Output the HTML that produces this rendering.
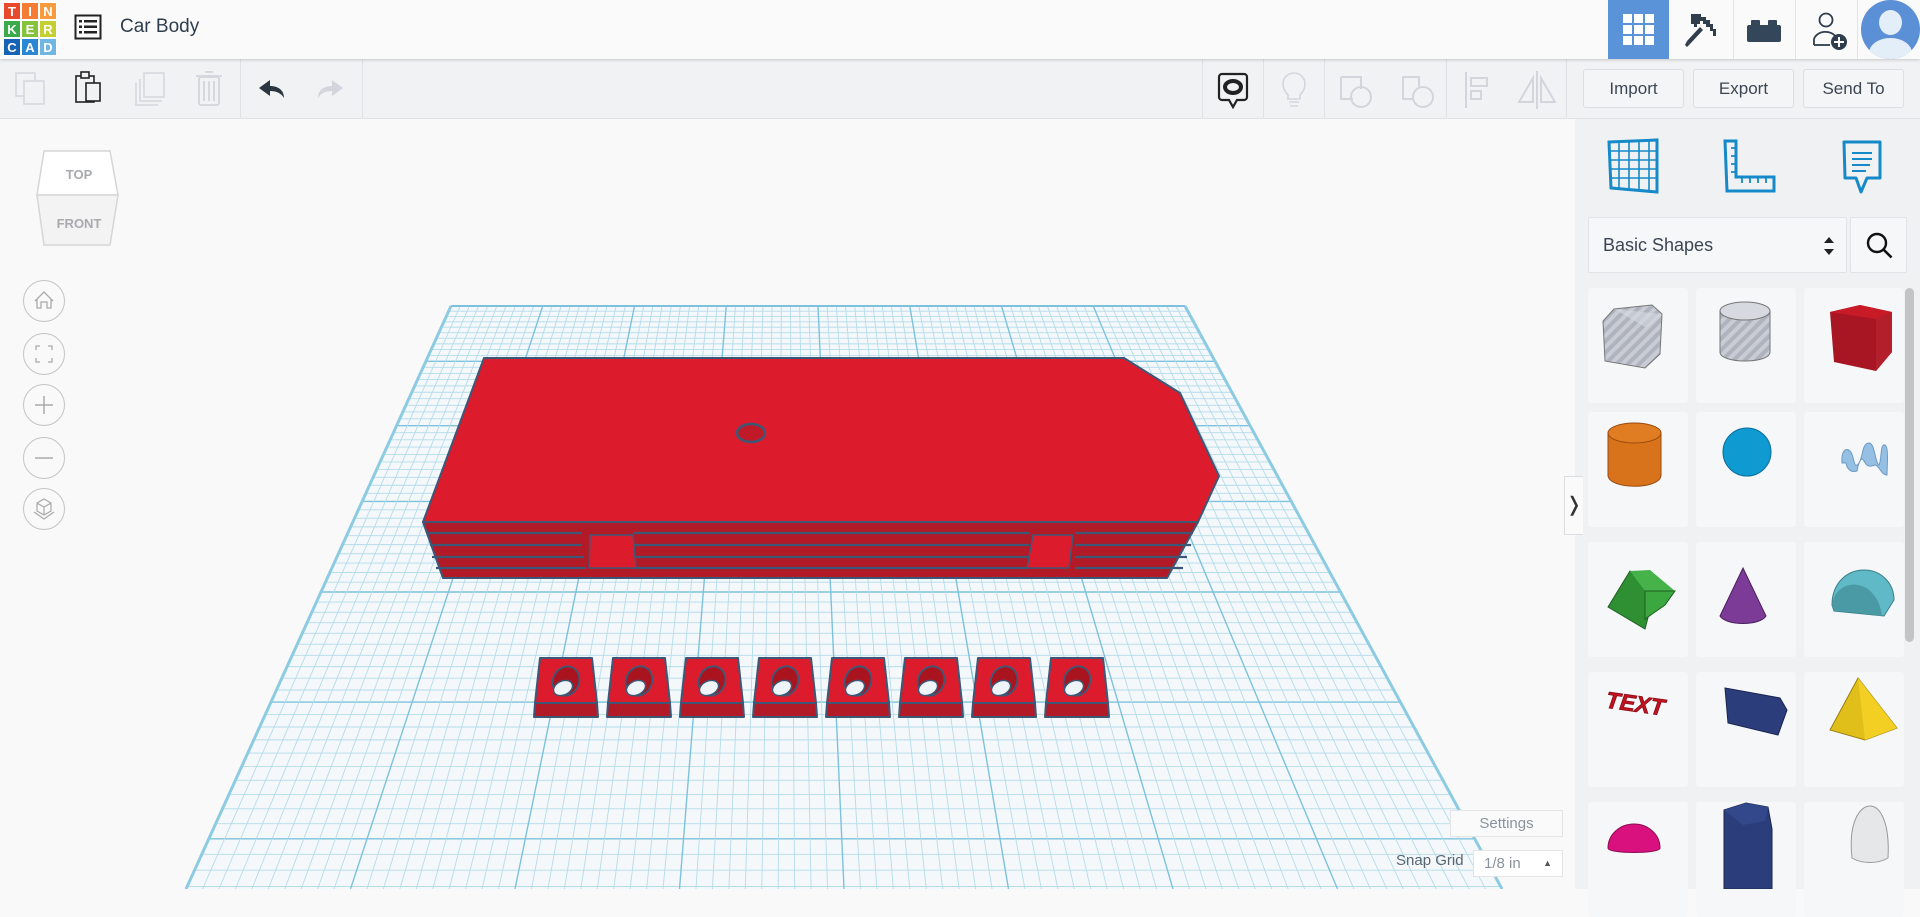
<!DOCTYPE html>
<html><head><meta charset="utf-8">
<style>
*{box-sizing:border-box;margin:0;padding:0}
body{width:1920px;height:889px;overflow:hidden;background:#f9f9f9;font-family:"Liberation Sans",sans-serif;position:relative}
.abs{position:absolute}
#hdr{left:0;top:0;width:1920px;height:59px;background:#fafafa;box-shadow:0 1px 3px rgba(0,0,0,.18);z-index:5}
#tb{left:0;top:59px;width:1920px;height:60px;background:#f1f2f4;border-bottom:1px solid #dfe1e4;z-index:4}
.sep{position:absolute;top:0;width:1px;height:60px;background:#e0e2e5}
.btn{position:absolute;top:10px;height:39px;border:1px solid #dcdee2;border-radius:3px;background:#f4f5f7;color:#3c4653;font-size:17px;text-align:center;line-height:37px}
#panel{left:1575px;top:119px;width:345px;height:770px;background:#f0f1f3}
.tile{position:absolute;width:100px;height:115px;background:#f6f7f9;border-radius:3px}
.nav{position:absolute;left:23px;width:42px;height:42px;border:1px solid #c4c4c4;border-radius:50%;background:#f9f9f9}
</style></head><body>

<svg class="abs" style="left:0;top:119px" width="1575" height="770" id="grid"></svg>

<div id="hdr" class="abs">
  <div class="abs" style="left:3px;top:2px;width:54px;height:54px;display:grid;grid-template-columns:repeat(3,18px);grid-template-rows:repeat(3,18px);font-weight:bold;font-size:13px;color:#fff;text-align:center;line-height:18px">
    <div style="background:#e8482c;border:1px solid #fff">T</div><div style="background:#f57c35;border:1px solid #fff">I</div><div style="background:#f79b3c;border:1px solid #fff">N</div>
    <div style="background:#3aaa4a;border:1px solid #fff">K</div><div style="background:#86c33c;border:1px solid #fff">E</div><div style="background:#c4d032;border:1px solid #fff">R</div>
    <div style="background:#1663b4;border:1px solid #fff">C</div><div style="background:#2a87d3;border:1px solid #fff">A</div><div style="background:#6fb6e2;border:1px solid #fff">D</div>
  </div>
  <svg class="abs" style="left:74px;top:14px" width="28" height="26" viewBox="0 0 28 26"><rect x="1.5" y="1.5" width="25" height="23" fill="none" stroke="#222" stroke-width="2"/><g fill="#222"><rect x="5" y="6" width="3" height="2.5"/><rect x="10" y="6" width="13" height="2.5"/><rect x="5" y="11.5" width="3" height="2.5"/><rect x="10" y="11.5" width="13" height="2.5"/><rect x="5" y="17" width="3" height="2.5"/><rect x="10" y="17" width="13" height="2.5"/></g></svg>
  <div class="abs" style="left:120px;top:16px;font-size:19px;color:#2f3d4c">Car Body</div>
  <div class="abs" style="left:1608px;top:0;width:61px;height:59px;background:#5a93d8"></div>
  <svg class="abs" style="left:1623px;top:14px" width="31" height="31"><g fill="#fff"><rect x="0" y="0" width="9" height="9"/><rect x="11" y="0" width="9" height="9"/><rect x="22" y="0" width="9" height="9"/><rect x="0" y="11" width="9" height="9"/><rect x="11" y="11" width="9" height="9"/><rect x="22" y="11" width="9" height="9"/><rect x="0" y="22" width="9" height="9"/><rect x="11" y="22" width="9" height="9"/><rect x="22" y="22" width="9" height="9"/></g></svg>
  <div class="abs" style="left:1733px;top:0;width:1px;height:59px;background:#e2e3e5"></div>
  <div class="abs" style="left:1795px;top:0;width:1px;height:59px;background:#e2e3e5"></div>
  <div class="abs" style="left:1857px;top:0;width:1px;height:59px;background:#e2e3e5"></div>
  <svg class="abs" style="left:1683px;top:12px" width="40" height="38" viewBox="0 0 40 38"><path d="M8 2h10v3h5v3h4v4h3v5h3v7h-3v-5h-3v-4h-4v-3h-3v-3h-3v3h-3v3h-3v-3h-3v-4zM17 15l3 3-13 14-3-3z" fill="#2f3d4c"/><path d="M4 29l3 3-3 3-2-2z" fill="#2f3d4c"/></svg>
  <svg class="abs" style="left:1747px;top:20px" width="34" height="22"><rect x="0" y="5" width="34" height="17" rx="2" fill="#34465a"/><rect x="4" y="0" width="9" height="7" rx="1" fill="#34465a"/><rect x="21" y="0" width="9" height="7" rx="1" fill="#34465a"/></svg>
  <svg class="abs" style="left:1812px;top:11px" width="36" height="40" viewBox="0 0 36 40"><circle cx="14" cy="9" r="6.5" fill="none" stroke="#2f3d4c" stroke-width="1.8"/><path d="M2 34v-6a12 10 0 0 1 22-2" fill="none" stroke="#2f3d4c" stroke-width="1.8"/><path d="M2 34h16" stroke="#2f3d4c" stroke-width="1.8"/><circle cx="27" cy="31" r="8" fill="#2f3d4c"/><path d="M27 26v10M22 31h10" stroke="#fff" stroke-width="2"/></svg>
  <div class="abs" style="left:1861px;top:0;width:59px;height:59px;border-radius:50%;background:#5b8fd6;overflow:hidden"><div class="abs" style="left:18px;top:10px;width:23px;height:25px;border-radius:50%;background:#e4eef9"></div><div class="abs" style="left:8px;top:38px;width:43px;height:30px;border-radius:50%;background:#e4eef9"></div></div>
</div>

<div id="tb" class="abs">
  <svg class="abs" style="left:15px;top:13px" width="32" height="34"><rect x="1" y="1" width="19" height="23" fill="none" stroke="#d2d6dc" stroke-width="1.5"/><rect x="9" y="9" width="20" height="23" fill="#f1f2f4" stroke="#d2d6dc" stroke-width="1.5"/></svg>
  <svg class="abs" style="left:74px;top:11px" width="28" height="34"><rect x="2" y="6" width="18" height="26" fill="none" stroke="#222" stroke-width="1.6"/><rect x="7" y="2" width="8" height="6" fill="#f1f2f4" stroke="#222" stroke-width="1.6"/><rect x="12" y="13" width="14" height="18" fill="#f1f2f4" stroke="#222" stroke-width="1.6"/></svg>
  <svg class="abs" style="left:132px;top:12px" width="34" height="36"><path d="M4 12v22h22" fill="none" stroke="#d2d6dc" stroke-width="1.5"/><path d="M8 8v22h22" fill="none" stroke="#d2d6dc" stroke-width="1.5"/><rect x="12" y="2" width="20" height="24" fill="none" stroke="#d2d6dc" stroke-width="1.5"/></svg>
  <svg class="abs" style="left:196px;top:10px" width="26" height="38"><rect x="3" y="8" width="20" height="28" rx="2" fill="none" stroke="#d2d6dc" stroke-width="1.8"/><path d="M0 7h26M9 3h8M8 12v20M13 12v20M18 12v20" stroke="#d2d6dc" stroke-width="1.8"/></svg>
  <div class="sep" style="left:240px"></div>
  <svg class="abs" style="left:258px;top:20px" width="28" height="20"><path d="M12 1L1 9l11 8v-5c6 0 11 2 14 7 0-8-6-12-14-12z" fill="#2b3640"/></svg>
  <svg class="abs" style="left:316px;top:20px" width="28" height="20"><path d="M16 1l11 8-11 8v-5c-6 0-11 2-14 7 0-8 6-12 14-12z" fill="#d2d6dc"/></svg>
  <div class="sep" style="left:362px"></div>
  <div class="sep" style="left:1202px"></div>
  <svg class="abs" style="left:1217px;top:13px" width="32" height="38"><path d="M5 2h22a3 3 0 0 1 3 3v20a3 3 0 0 1-3 3h-7l-4 7-4-7H5a3 3 0 0 1-3-3V5a3 3 0 0 1 3-3z" fill="none" stroke="#222" stroke-width="2.2"/><ellipse cx="16" cy="15" rx="8" ry="6" fill="none" stroke="#222" stroke-width="4"/></svg>
  <div class="sep" style="left:1263px"></div>
  <svg class="abs" style="left:1282px;top:12px" width="24" height="38"><path d="M6 24c-3-3-5-6-5-11a11 11 0 0 1 22 0c0 5-2 8-5 11v4H6z" fill="none" stroke="#d2d6dc" stroke-width="1.6"/><path d="M7 31h10M8 35h8" stroke="#d2d6dc" stroke-width="1.6"/></svg>
  <div class="sep" style="left:1324px"></div>
  <svg class="abs" style="left:1339px;top:16px" width="34" height="34"><path d="M2 2h20v12a9 9 0 1 0 0 0" fill="none" stroke="#d2d6dc" stroke-width="2"/><path d="M2 2v22h12" fill="none" stroke="#d2d6dc" stroke-width="2"/><circle cx="22" cy="22" r="10" fill="none" stroke="#d2d6dc" stroke-width="2"/></svg>
  <svg class="abs" style="left:1401px;top:16px" width="34" height="34"><path d="M18 12V2H2v22h10" fill="none" stroke="#d2d6dc" stroke-width="2"/><circle cx="22" cy="22" r="10" fill="none" stroke="#d2d6dc" stroke-width="2"/></svg>
  <div class="sep" style="left:1446px"></div>
  <svg class="abs" style="left:1464px;top:13px" width="26" height="36"><path d="M2 0v36" stroke="#d2d6dc" stroke-width="2"/><rect x="7" y="6" width="16" height="8" fill="none" stroke="#d2d6dc" stroke-width="2"/><rect x="7" y="19" width="10" height="8" fill="none" stroke="#d2d6dc" stroke-width="2"/></svg>
  <svg class="abs" style="left:1517px;top:12px" width="40" height="38"><path d="M20 0v38" stroke="#d2d6dc" stroke-width="2"/><path d="M16 7L2 31h14z" fill="none" stroke="#d2d6dc" stroke-width="2"/><path d="M24 7l14 24H24z" fill="none" stroke="#d2d6dc" stroke-width="2"/></svg>
  <div class="sep" style="left:1566px"></div>
  <div class="btn" style="left:1583px;width:101px">Import</div>
  <div class="btn" style="left:1693px;width:101px">Export</div>
  <div class="btn" style="left:1803px;width:101px">Send To</div>
</div>

<svg class="abs" style="left:34px;top:148px" width="90" height="102"><path d="M10 3h66l8 44H3z" fill="#fff" stroke="#d6d6d6" stroke-width="1.5"/><path d="M3 47h81l-8 50H10z" fill="#f3f3f3" stroke="#d6d6d6" stroke-width="1.5"/><text x="45" y="31" font-size="13" font-weight="bold" fill="#a8aaae" text-anchor="middle" font-family="Liberation Sans">TOP</text><text x="45" y="80" font-size="13" font-weight="bold" fill="#a8aaae" text-anchor="middle" font-family="Liberation Sans">FRONT</text></svg>
<div class="nav" style="top:280px"><svg width="40" height="40"><path d="M11 20l9-9 9 9M13 18v9h4v-6h6v6h4v-9" fill="none" stroke="#aaa" stroke-width="1.3"/></svg></div>
<div class="nav" style="top:333px"><svg width="40" height="40"><path d="M12 16v-4h4M24 12h4v4M28 24v4h-4M16 28h-4v-4" fill="none" stroke="#aaa" stroke-width="1.3"/></svg></div>
<div class="nav" style="top:384px"><svg width="40" height="40"><path d="M20 11v18M11 20h18" stroke="#aaa" stroke-width="1.5"/></svg></div>
<div class="nav" style="top:437px"><svg width="40" height="40"><path d="M11 20h18" stroke="#aaa" stroke-width="1.5"/></svg></div>
<div class="nav" style="top:488px"><svg width="40" height="40"><path d="M20 10l7 4v8l-7 4-7-4v-8zM13 14l7 4 7-4M20 18v8M10 23l10 7 10-7" fill="none" stroke="#aaa" stroke-width="1.2"/></svg></div>

<svg class="abs" style="left:0;top:0" width="1575" height="889">
 <g stroke="#3d5877" stroke-width="2" stroke-linejoin="round">
  <path d="M423 522h775l-31 56H443z" fill="#b21a27"/>
  <path d="M484 358h640l56 35 39 83-21 46H423z" fill="#dc1c2d"/>
  <path d="M428 533h154M430 545h152M432 557h152M436 568h150M633 533h396M633 545h396M633 557h396M633 568h396M1075 533h118M1075 545h116M1075 557h112M1075 568h108" fill="none" stroke-width="2.2"/>
  <path d="M590 535h43l3 33h-47z" fill="#dc1c2d" stroke-width="1.5"/>
  <path d="M1033 535h40l-4 33h-42z" fill="#dc1c2d" stroke-width="1.5"/>
  <ellipse cx="751" cy="433" rx="14" ry="9" fill="#c01a28" stroke-width="2.5"/>
 </g>
 <g id="blocks" stroke="#3d5877" stroke-width="2" stroke-linejoin="round"></g>
</svg>

<div class="abs" style="left:1450px;top:810px;width:113px;height:27px;border:1px solid #e3e4e6;background:#fafafa;color:#8a939d;font-size:15px;text-align:center;line-height:25px">Settings</div>
<div class="abs" style="left:1396px;top:852px;font-size:15px;color:#5b6570">Snap Grid</div>
<div class="abs" style="left:1473px;top:850px;width:90px;height:27px;border:1px solid #e3e4e6;background:#fff;color:#8a939d;font-size:15px;line-height:25px;padding-left:10px">1/8 in<span style="position:absolute;right:10px;top:0;font-size:9px;color:#555">▲</span></div>

<div id="panel" class="abs"></div>
<div class="abs" style="left:1564px;top:476px;width:19px;height:59px;background:#fafafa;border:1px solid #dcdde0;border-right:none;font-size:20px;line-height:57px;text-align:center;color:#333">&#x276D;</div>
<svg class="abs" style="left:1605px;top:138px" width="56" height="56" viewBox="0 0 56 56"><path d="M4 4l48-2v52L6 50z" fill="none" stroke="#168ac8" stroke-width="3"/><g stroke="#168ac8" stroke-width="1.6"><path d="M14 4v47M24 3v48M34 3v49M44 2v51M5 13h47M5 22h47M5 31h47M6 40h46"/></g></svg>
<svg class="abs" style="left:1722px;top:138px" width="54" height="58" viewBox="0 0 54 58"><path d="M3 3h11v36h38v14H5z" fill="none" stroke="#168ac8" stroke-width="3"/><path d="M14 10h-5M14 18h-5M14 26h-5M14 34h-5M20 39v6M28 39v6M36 39v6M44 39v6" stroke="#168ac8" stroke-width="1.8"/></svg>
<svg class="abs" style="left:1840px;top:138px" width="44" height="58" viewBox="0 0 44 58"><path d="M4 4h36v36H27l-6 14-5-14H5z" fill="none" stroke="#168ac8" stroke-width="3" stroke-linejoin="round"/><path d="M12 15h20M12 21h20M12 27h18M12 33h14" stroke="#168ac8" stroke-width="2"/></svg>
<div class="abs" style="left:1588px;top:217px;width:259px;height:56px;background:#f6f7f9;border:1px solid #e1e3e6;border-radius:2px;font-size:18px;color:#3c4653;line-height:54px;padding-left:14px">Basic Shapes<svg style="position:absolute;right:12px;top:19px" width="10" height="18"><path d="M5 0l5 6H0zM5 18l5-6H0z" fill="#222"/></svg></div>
<div class="abs" style="left:1850px;top:217px;width:57px;height:56px;background:#f6f7f9;border:1px solid #e1e3e6;border-radius:2px"><svg style="position:absolute;left:15px;top:14px" width="28" height="28"><circle cx="11" cy="11" r="9" fill="none" stroke="#111" stroke-width="2.4"/><path d="M17.5 17.5l8 8" stroke="#111" stroke-width="2.6"/></svg></div>

<div id="tiles"></div>
<div class="abs" style="left:1905px;top:288px;width:9px;height:354px;background:#c4c4c4;border-radius:5px"></div>

<svg class="abs" style="left:1588px;top:288px;pointer-events:none" width="320" height="601">
 <defs><pattern id="st" width="8" height="8" patternUnits="userSpaceOnUse" patternTransform="rotate(45)"><rect width="8" height="8" fill="#c9ccd4"/><rect width="4" height="8" fill="#aeb3bd"/></pattern></defs>
 <path d="M26 21l38-4 10 9-2 40-15 14-40-7-2-40z" fill="url(#st)" stroke="#777" stroke-width="1"/>
 <path d="M26 21l48 5-15 14z" fill="#d6d9df" opacity=".6"/>
 <path d="M132 23v41c0 12 50 12 50 0V23z" fill="url(#st)" stroke="#777" stroke-width="1"/>
 <ellipse cx="157" cy="23" rx="25" ry="9" fill="#d6d9df" stroke="#777" stroke-width="1"/>
 <path d="M242 24l30-7 32 7v40l-16 19-42-9z" fill="#a71622"/>
 <path d="M242 24l30-7 32 7-16 7z" fill="#c81a27"/><path d="M288 31l16-7v40l-16 19z" fill="#b3202b"/>
 <path d="M20 145v42c0 15 53 15 53 0v-42z" fill="#d8731c" stroke="#9a4a10" stroke-width="1"/>
 <ellipse cx="46.5" cy="145" rx="26.5" ry="10" fill="#e07c22" stroke="#9a4a10" stroke-width="1"/>
 <circle cx="159" cy="164" r="24" fill="#0f9ad2" stroke="#0b6d99" stroke-width="1"/>
 <path d="M254 175c-1-12 4-16 8-12 5 5 3 20 9 12 4-6 3-20 10-20 6 0 6 20 10 22 3-6 1-22 6-20 4 2 2 22 2 30-6 0-8-10-12-10-5 2-8 2-11-4-3-6-6 4-7 10-6 2-10-2-11-8z" fill="#95bfe3" stroke="#6c9ac3" stroke-width="1"/>
 <path d="M20 319l22-36 25 20-10 38z" fill="#2f8f33" stroke="#1d5e20" stroke-width="1"/>
 <path d="M42 283l20-1 25 21-10 14 -20-14z" fill="#45b34a"/><path d="M57 303l30 0-10 14-20 14z" fill="#3ba83f" stroke="#1d5e20" stroke-width="1"/>
 <path d="M155 280l-23 48c6 10 40 10 46 0z" fill="#7b3b96" stroke="#4b2060" stroke-width="1"/>
 <path d="M244 317c0-22 15-35 32-35s30 13 30 30l-10 16-50-5z" fill="#5fb9c6" stroke="#3a7f8a" stroke-width="1"/>
 <path d="M244 317c2-15 14-22 26-20 12 2 22 14 24 31l-48-6z" fill="#4a9aa5"/>
 <text x="18" y="424" font-size="23" font-weight="bold" font-style="italic" fill="#c2121f" stroke="#8a0d16" stroke-width=".8" font-family="Liberation Sans" transform="rotate(8 50 415)">TEXT</text>
 <path d="M137 400l55 10 7 12-9 25-50-12z" fill="#2b3d7a" stroke="#1a2650" stroke-width="1"/>
 <path d="M270 390l-28 52 35 10 32-12z" fill="#e0bf1a" stroke="#9a8010" stroke-width="1"/><path d="M270 390l7 62 32-12z" fill="#f2cf22"/>
 <path d="M20 560a26 24 0 0 1 52 0c0 6-52 6-52 0z" fill="#d9117e" stroke="#8a0b52" stroke-width="1"/>
 <path d="M136 522l22-7 22 4 4 22v60h-48v-60z" fill="#2b3d7a" stroke="#1a2650" stroke-width="1"/>
 <path d="M136 522l22-7 22 4-3 14-22 4z" fill="#33488a"/>
 <path d="M264 570c-4-36 8-52 18-52s20 16 18 52c-10 6-26 6-36 0z" fill="#e6e7e9" stroke="#999" stroke-width="1"/>
</svg>

<script>
(function(){
 var ns="http://www.w3.org/2000/svg";
 var g=document.getElementById('grid');
 function L(x1,y1,x2,y2,c,w){var l=document.createElementNS(ns,'line');l.setAttribute('x1',x1);l.setAttribute('y1',y1-119);l.setAttribute('x2',x2);l.setAttribute('y2',y2-119);l.setAttribute('stroke',c);l.setAttribute('stroke-width',w);g.appendChild(l);}
 var p=document.createElementNS(ns,'polygon');p.setAttribute('points','451,187 1185,187 1502,770 186,770');p.setAttribute('fill','#f4f8fa');g.appendChild(p);
 var u0=1/734,c=0.0000955;
 function yAt(k){var u=1/(u0-c*k);return 306+(u-734);}
 for(var k=0;k<=70;k++){var t=k/10;var y=yAt(t);if(y>889)break;
  var xl=451-(y-306)*0.4545,xr=1185+(y-306)*0.5437;
  var maj=(k%10==0);L(xl,y,xr,y,maj?'#7dc2dc':'#b5dcea',maj?1.4:0.9);}
 for(var i=0;i<=80;i++){var s=i/80;var maj=(i%10==0);
  L(451+734*s,306,186+1316*s,889,maj?'#7dc2dc':'#b5dcea',maj?1.4:0.9);}
 L(451,306,1185,306,'#7dc2dc',2);L(451,306,186,889,'#8ccbe2',3);L(1185,306,1502,889,'#8ccbe2',3);
 var bg=document.getElementById('blocks');
 for(var i=0;i<8;i++){var x=533+i*73;
  var h='<path d="M'+(x+7)+' 658h52l5 45h-62z" fill="#dc1c2d"/>'+
   '<path d="M'+(x+2)+' 703h62l1 14h-64z" fill="#b21a27"/>'+
   '<ellipse cx="'+(x+33)+'" cy="681" rx="13" ry="15" fill="#a9141f" stroke-width="1.8" transform="rotate(25 '+(x+33)+' 681)"/>'+
   '<ellipse cx="'+(x+30)+'" cy="688" rx="10" ry="7" fill="#eef4f7" stroke-width="1.5" transform="rotate(-25 '+(x+30)+' 688)"/>';
  bg.insertAdjacentHTML('beforeend',h);}
 var t=document.getElementById('tiles');var cx=[1588,1696,1804],cy=[288,412,542,672,802];
 cy.forEach(function(y){cx.forEach(function(x){var d=document.createElement('div');d.className='tile abs';d.style.left=x+'px';d.style.top=y+'px';t.appendChild(d);});});
})();
</script>
</body></html>
